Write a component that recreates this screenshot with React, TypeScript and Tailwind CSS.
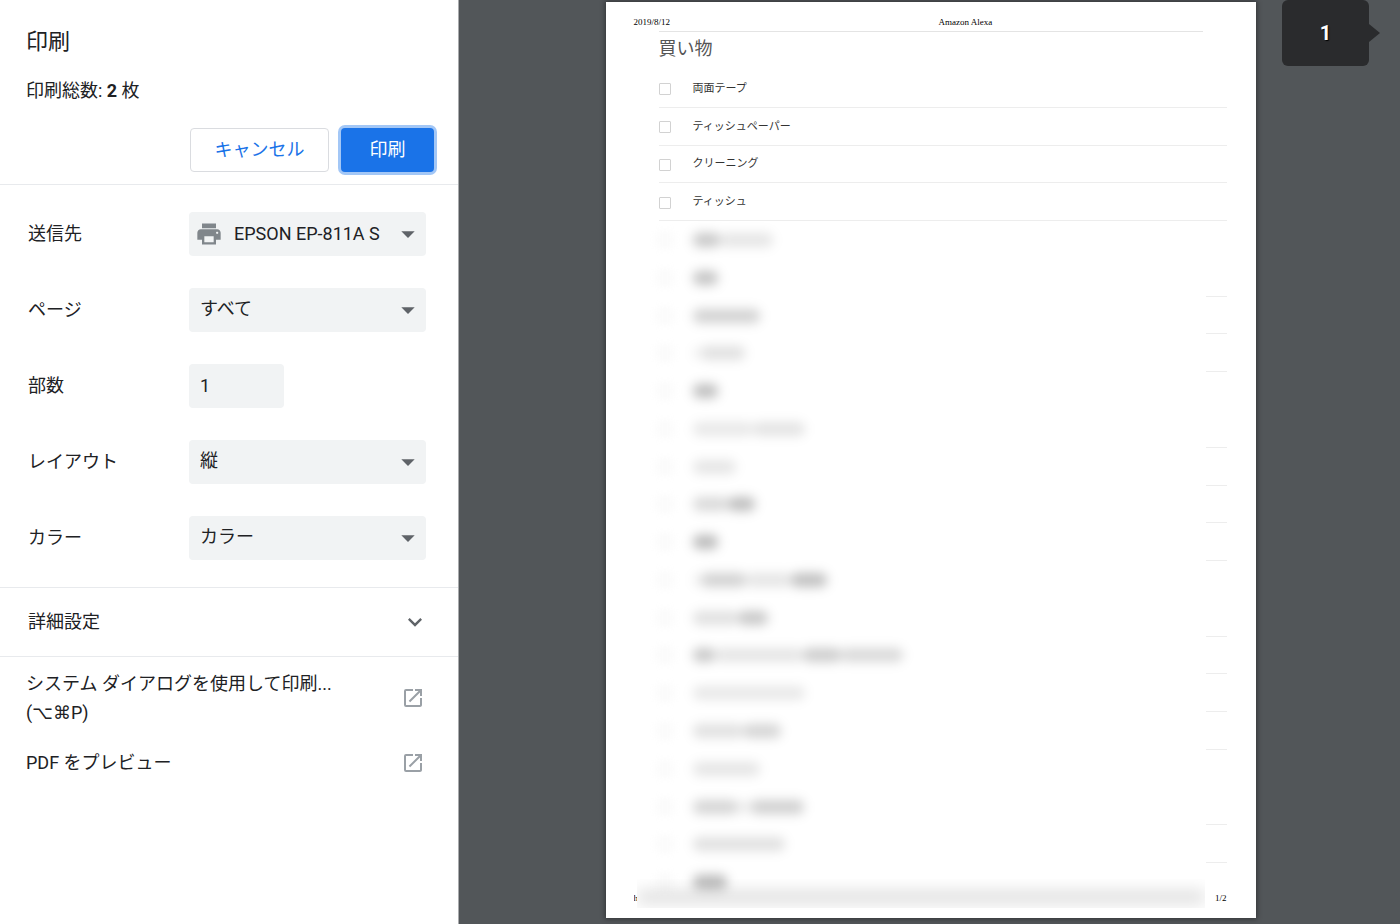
import React from "react";
import { MdArrowDropDown, MdExpandMore, MdOpenInNew, MdPrint } from "react-icons/md";

interface SelectRowProps {
  id: string;
  label: string;
  value: string;
  icon?: React.ReactNode;
}

function SelectRow({ id, label, value, icon }: SelectRowProps) {
  return (
    <div className="flex items-center">
      <label htmlFor={id} className="w-[161px] shrink-0">{label}</label>
      <div className="relative flex-1">
        {icon}
        <select
          id={id}
          className={
            icon
              ? "h-11 w-full appearance-none rounded bg-[#f1f3f4] pl-[45px] pr-10 outline-none"
              : "h-11 w-full appearance-none rounded bg-[#f1f3f4] pb-0.5 pl-[11px] pr-10 outline-none"
          }
        >
          <option>{value}</option>
        </select>
        <MdArrowDropDown className="pointer-events-none absolute right-0.5 top-1.5 h-8 w-8 text-[#5f6368]" />
      </div>
    </div>
  );
}

const items = ["両面テープ", "ティッシュペーパー", "クリーニング", "ティッシュ"];

// Redacted entries: each run is [width, opacity]
const redacted: { runs: [number, number][]; line?: boolean }[] = [
  { runs: [[27, 0.22], [53, 0.1]] },
  { runs: [[25, 0.24]], line: true },
  { runs: [[67, 0.18]], line: true },
  { runs: [[8, 0.05], [44, 0.12]], line: true },
  { runs: [[25, 0.26]] },
  { runs: [[60, 0.09], [52, 0.11]], line: true },
  { runs: [[43, 0.1]], line: true },
  { runs: [[35, 0.15], [27, 0.26]], line: true },
  { runs: [[25, 0.28]], line: true },
  { runs: [[8, 0.05], [45, 0.18], [45, 0.1], [36, 0.25]] },
  { runs: [[45, 0.12], [30, 0.22]], line: true },
  { runs: [[22, 0.22], [88, 0.1], [38, 0.2], [62, 0.15]], line: true },
  { runs: [[112, 0.09]], line: true },
  { runs: [[50, 0.12], [38, 0.17]], line: true },
  { runs: [[67, 0.1]] },
  { runs: [[45, 0.17], [13, 0.07], [53, 0.19]], line: true },
  { runs: [[92, 0.12]], line: true },
  { runs: [[34, 0.28]] },
];

function PrintSettings() {
  return (
    <aside className="w-[459px] shrink-0 border-r border-[#a9abad] bg-white">
      <header className="border-b border-[#e8eaed] pb-3 pl-[26px] pr-6 pt-6">
        <h1 className="text-[22px] leading-9">印刷</h1>
        <p className="mt-4 leading-[30px]">
          印刷総数: <b className="font-bold">2</b> 枚
        </p>
        <div className="mt-[22px] flex justify-end gap-3">
          <button className="h-11 w-[139px] rounded border border-[#dadce0] text-[#1a73e8]">キャンセル</button>
          <button className="h-11 w-[93px] rounded bg-[#1a73e8] text-white ring-3 ring-[#a3c7f6]">印刷</button>
        </div>
      </header>

      <form className="flex flex-col gap-8 border-b border-[#e8eaed] py-[27px] pl-7 pr-8">
        <SelectRow
          id="destination"
          label="送信先"
          value="EPSON EP-811A S"
          icon={<MdPrint className="pointer-events-none absolute left-1.5 top-2 h-7 w-7 text-[#80868b]" />}
        />
        <SelectRow id="pages" label="ページ" value="すべて" />
        <div className="flex items-center">
          <label htmlFor="copies" className="w-[161px] shrink-0">部数</label>
          <input
            id="copies"
            type="text"
            defaultValue="1"
            className="h-11 w-[95px] rounded bg-[#f1f3f4] px-[11px] pb-0.5 outline-none"
          />
        </div>
        <SelectRow id="layout" label="レイアウト" value="縦" />
        <SelectRow id="color" label="カラー" value="カラー" />
      </form>

      <button className="flex h-[69px] w-full items-center justify-between border-b border-[#e8eaed] pl-7 pr-[29px] text-left">
        詳細設定
        <MdExpandMore className="h-7 w-7 text-[#5f6368]" />
      </button>

      <nav className="flex flex-col gap-[21px] pl-[26px] pr-[33px] pt-3 leading-[29px]">
        <a href="#system-dialog" className="flex items-center justify-between">
          <span>
            システム ダイアログを使用して印刷...
            <br />
            <span className="font-['Roboto','DejaVu_Sans',sans-serif]">(⌥⌘P)</span>
          </span>
          <MdOpenInNew className="h-6 w-6 text-[#9aa0a6]" />
        </a>
        <a href="#preview" className="flex items-center justify-between">
          <span>PDF をプレビュー</span>
          <MdOpenInNew className="h-6 w-6 text-[#9aa0a6]" />
        </a>
      </nav>
    </aside>
  );
}

function PreviewPage() {
  return (
    <article className="flex aspect-[650/916] w-[650px] flex-col bg-white shadow-[0_0_5px_1px_rgba(0,0,0,0.4)]">
      <header className="grid grid-cols-[305px_1fr] pl-7 pt-3.5 font-['Liberation_Serif',serif] text-[9px] leading-3 text-black">
        <span>2019/8/12</span>
        <span>Amazon Alexa</span>
      </header>
      <h2 className="mx-[53px] mt-[3px] border-t border-[#e4e4e4] pb-[5px] pt-px text-lg leading-8 text-[#555]">
        買い物
      </h2>

      <ul className="ml-[53px] mr-[29px] grid flex-1 auto-rows-fr text-[11px] text-[#333]">
        {items.map((item) => (
          <li key={item} className="flex items-center border-b border-[#ededed]">
            <label className="flex items-center gap-[22px]">
              <input type="checkbox" className="mt-0.5 h-3 w-3 appearance-none rounded-[1px] border border-[#d2d2d2]" />
              {item}
            </label>
          </li>
        ))}
        {redacted.map((row, i) => (
          <li key={i} className="flex items-stretch justify-between">
            <div className="flex items-center">
              <input
                type="checkbox"
                aria-label="項目"
                className="mr-[22px] h-3 w-3 appearance-none border border-[#e4e4e4] blur-[4px]"
              />
              <div className="flex h-3.5 overflow-visible blur-[5px]">
                {row.runs.map(([width, opacity], n) => (
                  <span key={n} className="h-full rounded-md bg-black blur-[3px]" style={{ width, opacity }} />
                ))}
              </div>
            </div>
            {row.line && <div className="w-[21px] border-b border-[#ededed]" />}
          </li>
        ))}
      </ul>

      <footer className="-mt-[22px] mb-2.5 flex h-[29px] items-center pl-7 pr-[29px] font-['Liberation_Serif',serif] text-[9px] text-black">
        <span className="w-[3px] overflow-hidden pt-2">h</span>
        <div className="h-full flex-1 overflow-hidden pt-3">
          <div className="h-3 bg-black/14 blur-[8px]" />
        </div>
        <span className="pl-2.5 pt-2">1/2</span>
      </footer>
    </article>
  );
}

export default function App() {
  return (
    <div className="flex h-screen overflow-hidden bg-[#525659] font-['Roboto','Noto_Sans_CJK_JP',sans-serif] text-lg text-[#202124]">
      <PrintSettings />
      <main className="relative flex flex-1 items-start justify-center pl-0.5 pt-0.5">
        <PreviewPage />

        {/* Page indicator */}
        <div className="absolute right-5 top-0 flex items-center">
          <div className="flex h-[66px] w-[87px] items-center justify-center rounded-md bg-[#2a2b2d] text-xl font-bold text-white text-shadow-[1px_1px_1px_#000]">
            1
          </div>
          <svg width="11" height="18" viewBox="0 0 11 18" className="fill-[#2a2b2d]">
            <path d="M0 0L11 9L0 18Z" />
          </svg>
        </div>
      </main>
    </div>
  );
}
